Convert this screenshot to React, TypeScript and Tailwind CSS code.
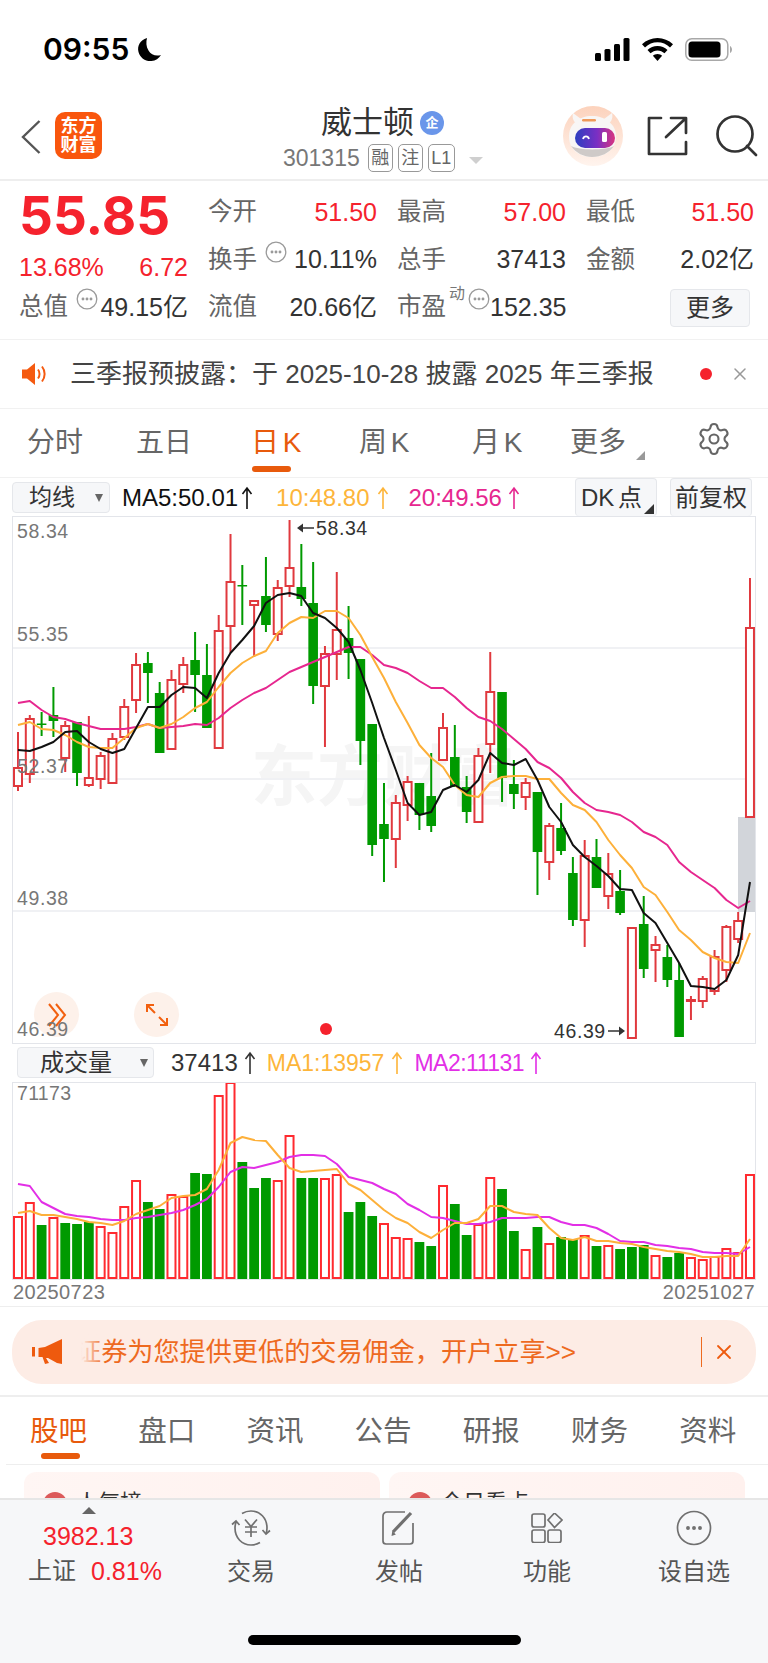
import { Settings, X } from 'lucide-react'

const CANDLE_RED = '#e0393e'
const GREEN = '#009a00'
const X0 = 18
const STEP = 11.806
const xAt = (i: number) => X0 + STEP * i

// [high, bodyTop, bodyBottom, low, isUp] in page pixels
const candles: [number, number, number, number, boolean][] = [
  [732, 768, 786, 791, true], [715, 719, 774, 783, true], [712, 723.5, 724.5, 736, false], [687, 715, 721, 737, false],
  [721, 726, 758, 772, true], [722, 722, 773, 786, false], [716, 778, 785, 787, true], [752, 756, 779, 789, true],
  [733, 739, 783, 783, true], [699, 707, 737, 740, true], [653, 665, 700, 713, true], [652, 663, 673, 703, false],
  [682, 693, 753, 753, false], [670, 680, 749, 749, true], [657, 665, 684, 693, true], [632, 660, 675, 712, false],
  [644, 675, 728, 728, false], [615, 631, 748, 748, true], [534, 582, 626, 653, true], [565, 585, 586, 625, false],
  [600, 601, 605, 657, true], [557, 596, 625, 632, false], [580, 588, 634, 641, true], [520, 568, 586, 597, true],
  [544, 587, 599, 606, false], [562, 603, 686, 704, false], [646, 654, 686, 747, true], [572, 630, 654, 680, true],
  [606, 638, 653, 679, false], [659, 659, 741, 765, false], [724, 724, 845, 856, false], [783, 824, 839, 882, false],
  [795, 803, 839, 868, true], [776, 782, 805, 821, true], [783, 783, 815, 830, false], [753, 796, 826, 832, false],
  [713, 728, 760, 760, true], [725, 757, 787, 787, false], [776, 787, 812, 823, false], [748, 756, 822, 822, true],
  [652, 692, 744, 773, true], [692, 692, 778, 802, false], [760, 784, 794, 809, false], [778, 783, 797, 810, true],
  [792, 792, 852, 895, false], [823, 826, 862, 880, true], [803, 828, 851, 855, false], [857, 873, 920, 926, false],
  [840, 856, 920, 947, true], [839, 857, 888, 888, false], [853, 874, 896, 909, true], [870, 891, 913, 915, false],
  [928, 928, 1038, 1039, true], [896, 924, 969, 978, false], [936, 945, 950, 982, true], [945, 957, 980, 987, false],
  [963, 980, 1037, 1037, false], [996, 1000, 1001, 1020, true], [976, 979, 1001, 1008, true], [950, 957, 991, 995, true],
  [925, 927, 970, 982, true], [912, 921, 939, 943, true], [578, 628, 817, 817, true],
]

const ma5 = [
  750, 751, 747, 742, 732, 731, 742, 749, 753, 749, 728, 707, 707, 695, 687, 688, 698, 673, 653, 640, 626, 603, 595, 593,
  596, 613, 618, 628, 642, 670, 703, 738, 770, 803, 815, 812, 790, 785, 792, 780, 753, 763, 765, 759, 780, 807, 822, 845,
  857, 866, 876, 889, 890, 913, 923, 943, 963, 986, 987, 989, 980, 955, 882,
]
const ma10 = [
  725, 722, 729, 730, 735, 742, 747, 748, 748, 738, 728, 724, 728, 724, 717, 708, 702, 687, 673, 663, 656, 651, 633, 623,
  617, 618, 611, 611, 618, 635, 657, 678, 702, 723, 745, 758, 767, 785, 795, 797, 783, 777, 776, 776, 779, 779, 793, 805,
  810, 822, 840, 855, 868, 887, 895, 912, 930, 940, 952, 958, 962, 963, 933,
]
const ma20 = [
  703, 701, 710, 717, 719, 723, 726, 729, 729, 729, 727, 724, 728, 727, 726, 724, 725, 718, 708, 700, 693, 688, 680, 672,
  667, 662, 657, 652, 647, 647, 655, 665, 668, 673, 681, 688, 688, 697, 708, 717, 721, 729, 739, 749, 762, 768, 778, 792,
  803, 810, 812, 815, 822, 832, 837, 845, 862, 872, 880, 888, 900, 908, 901,
]

// volume chart values, page pixels
const volTops = [
  1217, 1203, 1225, 1218, 1223, 1224, 1222, 1227, 1233, 1207, 1181, 1202, 1209, 1195, 1197, 1173, 1174, 1096, 1083, 1162,
  1188, 1178, 1181, 1136, 1178, 1178, 1179, 1175, 1212, 1202, 1216, 1224, 1238, 1239, 1242, 1246, 1186, 1204, 1235, 1225,
  1178, 1189, 1231, 1250, 1227, 1244, 1237, 1239, 1236, 1246, 1246, 1249, 1247, 1245, 1256, 1257, 1253, 1258, 1260, 1257,
  1249, 1253, 1175,
]
const volMa1 = [
  1213, 1211, 1215, 1215, 1217, 1219, 1222, 1223, 1225, 1221, 1214, 1210, 1206, 1198, 1196, 1195, 1189, 1170, 1143, 1137,
  1140, 1141, 1155, 1168, 1172, 1171, 1170, 1169, 1184, 1190, 1200, 1210, 1218, 1223, 1232, 1238, 1230, 1223, 1223, 1219,
  1206, 1206, 1212, 1214, 1215, 1228, 1238, 1240, 1237, 1241, 1241, 1243, 1244, 1247, 1249, 1251, 1252, 1254, 1257, 1257,
  1256, 1256, 1239,
]
const volMa2 = [
  1184, 1186, 1202, 1208, 1214, 1216, 1217, 1219, 1220, 1220, 1218, 1217, 1215, 1213, 1210, 1205, 1199, 1187, 1172, 1167,
  1168, 1165, 1162, 1157, 1155, 1155, 1156, 1164, 1177, 1180, 1183, 1189, 1194, 1204, 1210, 1217, 1218, 1221, 1224, 1224,
  1222, 1218, 1218, 1218, 1217, 1217, 1222, 1225, 1225, 1228, 1234, 1241, 1242, 1242, 1245, 1246, 1248, 1249, 1252, 1253,
  1253, 1254, 1247,
]
const volColors = 'RRGRGGGRRRRGGRRGGRRGGGRRGGRRGGGRRRGGRGGRRGGRGRGGRGRGGGRGGRRRRRR'

const points = (ys: number[]) => ys.map((y, i) => `${xAt(i).toFixed(1)},${y}`).join(' ')

function UpArrow({ color }: { color: string }) {
  return (
    <svg width="12" height="24" viewBox="0 0 12 24" fill="none" stroke={color} strokeWidth="1.6">
      <path d="M6 23V2M1.5 8 6 2l4.500 6" />
    </svg>
  )
}

function SideArrow({ left }: { left?: boolean }) {
  return (
    <svg width="17" height="10" viewBox="0 0 17 10" fill="#333" className={left ? '' : 'rotate-180'}>
      <path d="M0 5 6 .5v3.700h11v1.600H6V9.500Z" />
    </svg>
  )
}

function TipDot({ className = '' }: { className?: string }) {
  return (
    <svg className={`shrink-0 ${className}`} width="22" height="22" viewBox="0 0 22 22" fill="none" stroke="#9a9a9a" strokeWidth="1.3">
      <circle cx="11" cy="11" r="9.800" />
      <circle cx="7" cy="11" r=".8" fill="#9a9a9a" />
      <circle cx="11" cy="11" r=".8" fill="#9a9a9a" />
      <circle cx="15" cy="11" r=".8" fill="#9a9a9a" />
    </svg>
  )
}

function Stat({ label, value, red, tip }: { label: string; value: string; red?: boolean; tip?: boolean }) {
  return (
    <div className="flex items-center justify-between whitespace-nowrap">
      <div className="flex items-start">
        <span className="text-[24.500px] text-[#666]">{label}</span>
        {tip && <TipDot className="ml-[8px] -mt-[1px]" />}
      </div>
      <span className={`text-[25px] ${red ? 'text-[#f5222d]' : 'text-[#333]'}`}>{value}</span>
    </div>
  )
}

function Robot() {
  return (
    <svg width="60" height="60" viewBox="0 0 60 60">
      <defs>
        <linearGradient id="visor" x1="0" x2="1">
          <stop offset="0" stopColor="#2c3fc0" />
          <stop offset=".55" stopColor="#7a2fc4" />
          <stop offset="1" stopColor="#d9357f" />
        </linearGradient>
        <linearGradient id="halo" x1="0" x2="0" y1="0" y2="1">
          <stop offset="0" stopColor="#fcd2bc" />
          <stop offset="1" stopColor="#fff4ee" />
        </linearGradient>
      </defs>
      <circle cx="30" cy="30" r="30" fill="url(#halo)" />
      <path d="M10 7c-1 4 0 8 3 10l5-4ZM49 7c1 4 0 8-3 10l-5-4Z" fill="#f8f6f5" />
      <path d="M6 30c0-12 10-20 23-20s24 8 24 20c0 14-11 21-24 21S6 44 6 30Z" fill="#f8f6f5" />
      <path d="M8 40c5 7 13 11 21 11 9 0 17-4 22-11-6 4-34 5-43 0Z" fill="#cfcac8" />
      <rect x="19" y="13" width="14" height="2.500" rx="1.200" fill="#ef9a5a" />
      <rect x="12" y="22" width="40" height="20" rx="10" fill="url(#visor)" />
      <path d="M20 33c1-3.500 5-3.500 6 0" stroke="#fff" strokeWidth="1.800" fill="none" />
      <rect x="39" y="26" width="5" height="10" rx="1.500" fill="#fff" />
    </svg>
  )
}

function KChart() {
  return (
    <svg className="block" width="744" height="528" viewBox="12 516 744 528">
      {[648, 779, 911].map(y => (
        <line key={y} x1="12" x2="756" y1={y} y2={y} stroke="#f0f1f4" strokeWidth="2" />
      ))}
      <rect x="738" y="817" width="18" height="95" fill="#d2d5da" />
      {candles.map(([hi, top, bot, lo, up], i) => {
        const x = xAt(i)
        return up ? (
          <g key={i} stroke={CANDLE_RED} strokeWidth="2" fill="#fff">
            <line x1={x} x2={x} y1={hi} y2={top} />
            <line x1={x} x2={x} y1={bot} y2={lo} />
            <rect x={x - 4} y={top} width="8" height={Math.max(bot - top, 1)} />
          </g>
        ) : (
          <g key={i} fill={GREEN}>
            <rect x={x - 1} y={hi} width="2" height={lo - hi} />
            <rect x={x - 4.800} y={top} width="9.600" height={Math.max(bot - top, 1.500)} />
          </g>
        )
      })}
      <polyline points={points(ma20)} fill="none" stroke="#e6278f" strokeWidth="2" strokeLinejoin="round" />
      <polyline points={points(ma10)} fill="none" stroke="#fdb03a" strokeWidth="2" strokeLinejoin="round" />
      <polyline points={points(ma5)} fill="none" stroke="#111" strokeWidth="2" strokeLinejoin="round" />
    </svg>
  )
}

function VolChart() {
  return (
    <svg className="block" width="744" height="198" viewBox="12 1082 744 198">
      {volTops.map((top, i) => {
        const x = xAt(i)
        return volColors[i] === 'R' ? (
          <rect key={i} x={x - 4} y={top} width="8" height={1278 - top} fill="#fff" stroke="#ff2a2f" strokeWidth="2" />
        ) : (
          <rect key={i} x={x - 4.900} y={top} width="9.800" height={1279 - top} fill={GREEN} />
        )
      })}
      <polyline points={points(volMa2)} fill="none" stroke="#e22fe6" strokeWidth="2" strokeLinejoin="round" />
      <polyline points={points(volMa1)} fill="none" stroke="#fdb03a" strokeWidth="2" strokeLinejoin="round" />
    </svg>
  )
}

const topTabs = [
  { label: '分时', width: 'w-[109px]' },
  { label: '五日', width: 'w-[118px]' },
  { label: '日 K', width: 'w-[105px]', active: true },
  { label: '周 K', width: 'w-[113px]' },
  { label: '月 K', width: 'w-[98px]' },
]

const newsTabs = ['股吧', '盘口', '资讯', '公告', '研报', '财务', '资料']

export default function App() {
  return (
    <div className="w-[768px] h-[1663px] overflow-hidden bg-white flex flex-col text-[#333] [font-family:'Liberation_Sans','Noto_Sans_CJK_SC',sans-serif]">
      {/* Status bar */}
      <div className="h-[96px] shrink-0 flex items-center justify-between pl-[43px] pr-[36px] pt-[2px]">
        <div className="flex items-center gap-[8px]">
          <span className="text-[30px] font-semibold text-black leading-none [font-family:Inter,sans-serif]">09:55</span>
          <svg width="25" height="25" viewBox="0 0 25 25" fill="#000">
            <path d="M10 1C3 3 0 9 1.500 15c1.600 6 7 9.500 13 9 4-.4 7.500-2.500 9.500-6-5 1.500-10 0-12.500-4.500C9 9.500 9 5 10 1Z" />
          </svg>
        </div>
        <div className="flex items-center gap-[12px]">
          <svg width="35" height="23" viewBox="0 0 35 23" fill="#000">
            <rect x="0" y="15" width="6" height="8" rx="1.500" />
            <rect x="9.500" y="11" width="6" height="12" rx="1.500" />
            <rect x="19" y="6" width="6" height="17" rx="1.500" />
            <rect x="28.500" y="0" width="6" height="23" rx="1.500" />
          </svg>
          <svg width="31" height="23" viewBox="0 0 31 23" fill="#000">
            <path d="M15.500 0C9.500 0 4.300 2.300 0 6.200l3 3.300C6.500 6.200 10.800 4.300 15.500 4.300s9 1.900 12.500 5.200l3-3.300C26.700 2.300 21.500 0 15.500 0Z" />
            <path d="M15.500 8C11.600 8 8.300 9.500 5.500 12l3 3.300c2-1.800 4.300-2.900 7-2.900s5 1.100 7 2.900l3-3.300C22.700 9.500 19.400 8 15.500 8Z" />
            <path d="M15.500 16c-1.900 0-3.400.7-4.600 1.800l4.600 5.200 4.600-5.200C18.900 16.700 17.400 16 15.500 16Z" />
          </svg>
          <svg width="47" height="23" viewBox="0 0 47 23" fill="none">
            <rect x=".8" y=".8" width="42" height="21.400" rx="6" stroke="#a8a8a8" strokeWidth="1.500" />
            <rect x="3.500" y="3.500" width="32" height="16" rx="3.500" fill="#000" />
            <path d="M45 8v7c1.200-.5 2-2 2-3.500S46.200 8.500 45 8Z" fill="#a8a8a8" />
          </svg>
        </div>
      </div>

      {/* Nav bar */}
      <div className="h-[85px] shrink-0 flex items-start border-b-2 border-[#eeeeee]">
        <svg className="ml-[21px] mt-[24px] shrink-0" width="20" height="34" viewBox="0 0 20 34" fill="none" stroke="#555" strokeWidth="2.400">
          <path d="M18.500 1 2 17l16.500 16" />
        </svg>
        <div className="ml-[14px] mt-[16px] w-[47px] h-[47px] rounded-[10px] bg-[#f9560d] flex flex-col items-center justify-center text-white text-[18px] font-bold leading-[19px] shrink-0">
          <span>东方</span>
          <span>财富</span>
        </div>
        <div className="ml-[181px] w-[200px] shrink-0 flex flex-col">
          <div className="flex items-center mt-[5px] ml-[38px]">
            <span className="text-[31px] leading-[44px] text-[#333]">威士顿</span>
            <span className="ml-[6px] w-[24px] h-[24px] rounded-full bg-[#6a96ea] text-white text-[13px] font-bold flex items-center justify-center">企</span>
          </div>
          <div className="flex items-center -mt-[1px]">
            <span className="text-[23px] leading-[28px] text-[#777]">301315</span>
            <span className="ml-[8px] w-[25px] h-[28px] border border-[#999] rounded-[5px] text-[#666] text-[18px] leading-none flex items-center justify-center">融</span>
            <span className="ml-[5px] w-[25px] h-[28px] border border-[#999] rounded-[5px] text-[#666] text-[18px] leading-none flex items-center justify-center">注</span>
            <span className="ml-[5px] w-[27px] h-[28px] border border-[#999] rounded-[5px] text-[#666] text-[18px] leading-none flex items-center justify-center">L1</span>
            <span className="ml-[14px] mt-[4px] w-0 h-0 border-l-[7px] border-r-[7px] border-t-[7px] border-l-transparent border-r-transparent border-t-[#cfcfcf]" />
          </div>
        </div>
        <div className="ml-[80px] mt-[10px] shrink-0">
          <Robot />
        </div>
        <svg className="ml-[24px] mt-[20px] shrink-0" width="41" height="40" viewBox="0 0 41 40" fill="none" stroke="#333" strokeWidth="2.700" strokeLinecap="round" strokeLinejoin="round">
          <path d="M14 2H2v36h37V26" />
          <path d="M19 21 38 3M24 2h15v15" />
        </svg>
        <svg className="ml-[28px] mt-[19px] shrink-0" width="42" height="42" viewBox="0 0 42 42" fill="none" stroke="#333" strokeWidth="2.700">
          <circle cx="19" cy="19" r="17.500" />
          <path d="m31 31 9 9" strokeLinecap="round" />
        </svg>
      </div>

      {/* Quote */}
      <div className="h-[159px] shrink-0 border-b border-[#f1f1f1] pl-[19px] pt-[8px] grid grid-cols-[169px_169px_169px_168px] grid-rows-[47px_48px_47px] gap-x-[20px]">
        <div className="text-[53px] leading-[46px] font-bold text-[#f5222d] pt-[4px] [font-family:Inter,sans-serif]">55.85</div>
        <Stat label="今开" value="51.50" red />
        <Stat label="最高" value="57.00" red />
        <Stat label="最低" value="51.50" red />

        <div className="flex justify-between items-center pt-[15px] text-[25px] text-[#f5222d]">
          <span>13.68%</span>
          <span>6.72</span>
        </div>
        <Stat label="换手" value="10.11%" tip />
        <Stat label="总手" value="37413" />
        <Stat label="金额" value="2.02亿" />

        <Stat label="总值" value="49.15亿" tip />
        <Stat label="流值" value="20.66亿" />
        <div className="flex items-center justify-between whitespace-nowrap">
          <div className="flex items-start">
            <span className="text-[24.500px] text-[#666]">市盈</span>
            <span className="text-[16px] leading-[16px] text-[#777] ml-[3px] -mt-[3px]">动</span>
            <TipDot className="ml-[3px] -mt-[1px]" />
          </div>
          <span className="text-[25px] text-[#333]">152.35</span>
        </div>
        <div className="flex items-center justify-end pr-[4px]">
          <span className="w-[80px] h-[38px] rounded-[4px] bg-[#f6f7f9] border border-[#e5e7eb] text-[24px] text-[#333] flex items-center justify-center">更多</span>
        </div>
      </div>

      {/* Notice */}
      <div className="h-[69px] shrink-0 border-b border-[#f1f1f1] flex items-center pl-[22px]">
        <svg width="26" height="22" viewBox="0 0 26 22" fill="none">
          <path d="M0 6.500h5L13 0v22l-8-6.500H0Z" fill="#f55a10" />
          <path d="M16 6.500c2 2.500 2 6.500 0 9M20 3.500c3.500 4.500 3.500 10.500 0 15" stroke="#f55a10" strokeWidth="2" />
        </svg>
        <span className="ml-[22px] w-[630px] text-[26px] text-[#444] whitespace-nowrap">三季报预披露：于 2025-10-28 披露 2025 年三季报</span>
        <span className="w-[12px] h-[12px] rounded-full bg-[#f5222d]" />
        <X className="ml-[18px] text-[#999]" size={20} strokeWidth={1.8} />
      </div>

      {/* Period tabs */}
      <div className="h-[69px] shrink-0 border-b border-[#f1f1f1] flex items-start pl-[27px] pt-[15px]">
        {topTabs.map(tab => (
          <div key={tab.label} className={`${tab.width} shrink-0 flex flex-col`}>
            <span className={`text-[28px] leading-[38px] [word-spacing:-4px] ${tab.active ? 'text-[#e85a0c] -ml-[3px]' : 'text-[#666]'}`}>{tab.label}</span>
            {tab.active && <span className="mt-[4px] -ml-[2px] w-[39px] h-[6px] rounded-full bg-[#e85a0c]" />}
          </div>
        ))}
        <span className="text-[28px] leading-[38px] text-[#666] w-[66px] shrink-0">更多</span>
        <span className="mt-[27px] w-0 h-0 border-l-[9px] border-l-transparent border-b-[9px] border-b-[#999]" />
        <Settings className="ml-[51px] -mt-[3px] text-[#666]" size={36} strokeWidth={1.4} />
      </div>

      {/* MA legend */}
      <div className="h-[38px] shrink-0 flex items-start">
        <div className="ml-[12px] mt-[4px] w-[98px] h-[31px] rounded-[4px] bg-[#f6f7f9] border border-[#e5e7eb] flex items-center pl-[16px] text-[23px] text-[#333]">
          均线
          <span className="ml-[20px] w-0 h-0 border-l-[4.500px] border-r-[4.500px] border-t-[8px] border-l-transparent border-r-transparent border-t-[#666]" />
        </div>
        <div className="ml-[12px] mt-[7px] flex items-center text-[24px] leading-[26px] text-[#111]">
          MA5:50.01
          <span className="ml-[3px]"><UpArrow color="#111" /></span>
        </div>
        <div className="ml-[23px] mt-[7px] flex items-center text-[24px] leading-[26px] text-[#fdb53a]">
          10:48.80
          <span className="ml-[7px]"><UpArrow color="#fdb53a" /></span>
        </div>
        <div className="ml-[20px] mt-[7px] flex items-center text-[24px] leading-[26px] text-[#e6278f]">
          20:49.56
          <span className="ml-[6px]"><UpArrow color="#e6278f" /></span>
        </div>
        <div className="ml-[55px] w-[82px] h-[38px] rounded-[4px] bg-[#f6f7f9] border border-[#e5e7eb] border-b-0 relative flex items-center pl-[5px] text-[24px] text-[#333] whitespace-nowrap [word-spacing:-3px]">
          DK 点
          <span className="absolute right-[2px] bottom-[2px] w-0 h-0 border-l-[10px] border-l-transparent border-b-[10px] border-b-[#333]" />
        </div>
        <div className="ml-[13px] w-[82px] h-[38px] rounded-[4px] bg-[#f6f7f9] border border-[#e5e7eb] border-b-0 flex items-center justify-center text-[24px] text-[#333] whitespace-nowrap">
          前复权
        </div>
      </div>

      {/* K chart */}
      <div className="relative shrink-0 ml-[12px] w-[744px] h-[528px] border border-[#e3e5ea] overflow-hidden">
        <div className="absolute left-[238px] top-[227px] text-[66px] font-bold text-[#f5f5f5] whitespace-nowrap leading-none">东方财富</div>
        <div className="absolute -left-px -top-px">
          <KChart />
        </div>
        <div className="absolute left-[21px] top-[475px] w-[45px] h-[45px] rounded-full bg-[#fdf1ea] flex items-center justify-center">
          <svg width="20" height="24" viewBox="0 0 20 24" fill="none" stroke="#f2600f" strokeWidth="2">
            <path d="m2 1 9 11-9 11M9 1l9 11-9 11" />
          </svg>
        </div>
        <div className="absolute left-[121px] top-[475px] w-[45px] h-[45px] rounded-full bg-[#fdf1ea] flex items-center justify-center">
          <svg width="24" height="24" viewBox="0 0 24 24" fill="none" stroke="#f2600f" strokeWidth="2">
            <path d="M2 9V2h7M2 2l8 8M22 15v7h-7M22 22l-8-8" />
          </svg>
        </div>
        <span className="absolute left-[4px] top-[3px] text-[19.500px] leading-[22px] tracking-[.6px] text-[#777]">58.34</span>
        <span className="absolute left-[4px] top-[106px] text-[19.500px] leading-[22px] tracking-[.6px] text-[#777]">55.35</span>
        <span className="absolute left-[4px] top-[238px] text-[19.500px] leading-[22px] tracking-[.6px] text-[#777]">52.37</span>
        <span className="absolute left-[4px] top-[370px] text-[19.500px] leading-[22px] tracking-[.6px] text-[#777]">49.38</span>
        <span className="absolute left-[4px] top-[501px] text-[19.500px] leading-[22px] tracking-[.6px] text-[#777]">46.39</span>
        <div className="absolute left-[284px] top-0 flex items-center gap-[2px] text-[19.500px] leading-[22px] tracking-[.6px] text-[#333]">
          <SideArrow left />
          <span>58.34</span>
        </div>
        <div className="absolute left-[541px] top-[503px] flex items-center gap-[2px] text-[19.500px] leading-[22px] tracking-[.6px] text-[#333]">
          <span>46.39</span>
          <SideArrow />
        </div>
        <span className="absolute left-[307px] top-[506px] w-[12px] h-[12px] rounded-full bg-[#f5222d]" />
      </div>

      {/* Volume legend */}
      <div className="h-[38px] shrink-0 flex items-start">
        <div className="ml-[17px] mt-[3px] w-[137px] h-[31px] rounded-[4px] bg-[#f6f7f9] border border-[#e5e7eb] flex items-center pl-[22px] text-[24px] text-[#333]">
          成交量
          <span className="ml-[28px] w-0 h-0 border-l-[4.500px] border-r-[4.500px] border-t-[8px] border-l-transparent border-r-transparent border-t-[#666]" />
        </div>
        <div className="ml-[17px] mt-[6px] flex items-center text-[24px] leading-[26px] text-[#333]">
          37413
          <span className="ml-[6px]"><UpArrow color="#333" /></span>
        </div>
        <div className="ml-[11px] mt-[6px] flex items-center text-[23px] leading-[26px] text-[#fdb53a]">
          MA1:13957
          <span className="ml-[7px]"><UpArrow color="#fdb53a" /></span>
        </div>
        <div className="ml-[11px] mt-[6px] flex items-center text-[23px] leading-[26px] tracking-[-.5px] text-[#e22fe6]">
          MA2:11131
          <span className="ml-[6px]"><UpArrow color="#e22fe6" /></span>
        </div>
      </div>

      {/* Volume chart */}
      <div className="relative shrink-0 ml-[12px] w-[744px] h-[198px] border border-[#e3e5ea] overflow-hidden">
        <div className="absolute -left-px -top-px">
          <VolChart />
        </div>
        <span className="absolute left-[4px] -top-px text-[19.500px] leading-[22px] tracking-[.3px] text-[#777]">71173</span>
      </div>
      <div className="h-[27px] shrink-0 flex justify-between pl-[13px] pr-[13px] text-[20px] leading-[24px] tracking-[.4px] text-[#777] border-b border-[#eeeeee]">
        <span>20250723</span>
        <span>20251027</span>
      </div>

      {/* Promo banner */}
      <div className="h-[90px] shrink-0 border-b-2 border-[#eeeeee] pl-[12px] pr-[12px] pt-[13px]">
        <div className="h-[64px] rounded-[30px] bg-[#fdece5] flex items-center pl-[20px]">
          <svg width="31" height="26" viewBox="0 0 31 26" fill="#ee5a0e">
            <rect x="0" y="8" width="3" height="9.500" />
            <path d="M6.500 9 13 8 30 0v25l-5-1-9-5h-2l3 5-4 1-2.500-7h-4Z" />
          </svg>
          <div className="relative ml-[18px] w-[510px] overflow-hidden whitespace-nowrap">
            <span className="block -ml-[6px] text-[26.150px] leading-[36px] text-[#ee6a1f]">证券为您提供更低的交易佣金，开户立享&gt;&gt;</span>
            <span className="absolute left-0 top-0 h-full w-[24px] bg-gradient-to-r from-[#fdece5] to-transparent" />
          </div>
          <span className="ml-[110px] w-px h-[30px] bg-[#ee6a1f]" />
          <X className="ml-[10px] text-[#ee5a0e]" size={24} strokeWidth={1.8} />
        </div>
      </div>

      {/* News tabs */}
      <div className="h-[68px] shrink-0 ml-[6px] border-b border-[#eeeeee] flex items-start pl-[24px] pt-[15px]">
        {newsTabs.map((label, i) => (
          <div key={label} className="w-[108.200px] shrink-0 flex flex-col">
            <span className={`text-[28.500px] leading-[38px] ${i === 0 ? 'text-[#e85a0c]' : 'text-[#666]'}`}>{label}</span>
            {i === 0 && <span className="mt-[3px] ml-[11px] w-[39px] h-[6px] rounded-full bg-[#e85a0c]" />}
          </div>
        ))}
      </div>

      {/* Cards, cut off by the tool bar */}
      <div className="h-[33px] shrink-0 overflow-hidden flex gap-[9px] pl-[24px] pt-[7px]">
        <div className="w-[356px] h-[80px] rounded-[12px] bg-gradient-to-r from-[#fff6f4] to-[#fff1ee] pl-[19px] pt-[20px] flex gap-[9px] shrink-0">
          <span className="w-[24px] h-[24px] rounded-full bg-[#dc5a5a] shrink-0" />
          <span className="text-[22px] leading-[26px] -mt-[2px] text-[#333]">人气榜</span>
        </div>
        <div className="w-[356px] h-[80px] rounded-[12px] bg-gradient-to-r from-[#fff6f4] to-[#fff1ee] pl-[19px] pt-[20px] flex gap-[9px] shrink-0">
          <span className="w-[24px] h-[24px] rounded-full bg-[#dc5a5a] shrink-0" />
          <span className="text-[22px] leading-[26px] -mt-[2px] text-[#333]">今日看点</span>
        </div>
      </div>

      {/* Tool bar */}
      <div className="flex-1 bg-[#f6f7f9] border-t-2 border-[#e6e6e6] relative">
        <div className="absolute left-[28px] top-[7px] w-[140px] flex flex-col">
          <span className="ml-[54px] w-0 h-0 border-l-[7px] border-r-[7px] border-b-[7px] border-l-transparent border-r-transparent border-b-[#666]" />
          <span className="ml-[15px] mt-[7px] text-[25px] leading-[30px] text-[#f5222d]">3982.13</span>
          <div className="mt-[4px] flex items-center whitespace-nowrap">
            <span className="text-[24px] leading-[32px] text-[#555]">上证</span>
            <span className="ml-[15px] text-[25px] leading-[32px] text-[#f5222d]">0.81%</span>
          </div>
        </div>
        <div className="absolute left-[216px] top-[10px] w-[70px] flex flex-col items-center">
          <svg width="40" height="36" viewBox="0 0 40 36" fill="none" stroke="#707070" strokeWidth="1.700">
            <path d="M11 3.500C13.500 2 16.500 1 20 1c9 0 16 7 16 17 0 2-.4 4-1 5.500M29 32.500c-2.500 1.500-5.500 2.500-9 2.500-9 0-16-7-16-17 0-2 .4-4 1-5.500" />
            <path d="M1 14.500 5 11l3.500 4M31.500 20l3.500 4 4-3.500" />
            <path d="m14 9.500 6 7 6-7M20 16.500V27M14 17h12M14 22h12" />
          </svg>
          <span className="mt-[10px] text-[24px] leading-[32px] text-[#555]">交易</span>
        </div>
        <div className="absolute left-[364px] top-[10px] w-[70px] flex flex-col items-center">
          <svg width="34" height="36" viewBox="0 0 34 36" fill="none" stroke="#707070" strokeWidth="1.700">
            <path d="M23 2H5a4 4 0 0 0-4 4v25a3 3 0 0 0 3 3h24a3 3 0 0 0 3-3V13" />
            <path d="M11 22 29 3" strokeWidth="3.200" />
            <path d="m9.500 26 .8-5 3.600 3.500Z" fill="#707070" stroke="none" />
          </svg>
          <span className="mt-[10px] text-[24px] leading-[32px] text-[#555]">发帖</span>
        </div>
        <div className="absolute left-[512px] top-[10px] w-[70px] flex flex-col items-center">
          <svg className="my-[3px]" width="32" height="30" viewBox="0 0 32 30" fill="none" stroke="#707070" strokeWidth="1.700">
            <rect x="1" y="1" width="13" height="13" rx="2" />
            <rect x="1" y="17" width="13" height="12.500" rx="2" />
            <rect x="17" y="17" width="13" height="12.500" rx="2" />
            <path d="m23.500 0 7.500 7-7.500 7.500L17 7Z" />
          </svg>
          <span className="mt-[10px] text-[24px] leading-[32px] text-[#555]">功能</span>
        </div>
        <div className="absolute left-[659px] top-[10px] w-[70px] flex flex-col items-center">
          <svg width="36" height="36" viewBox="0 0 36 36" fill="none" stroke="#707070" strokeWidth="1.700">
            <circle cx="18" cy="18" r="16.500" />
            <circle cx="12" cy="18" r="1.100" fill="#707070" />
            <circle cx="18" cy="18" r="1.100" fill="#707070" />
            <circle cx="24" cy="18" r="1.100" fill="#707070" />
          </svg>
          <span className="mt-[10px] text-[24px] leading-[32px] text-[#555] whitespace-nowrap">设自选</span>
        </div>
        <span className="absolute left-[248px] top-[135px] w-[273px] h-[10px] rounded-full bg-black" />
      </div>
    </div>
  )
}
